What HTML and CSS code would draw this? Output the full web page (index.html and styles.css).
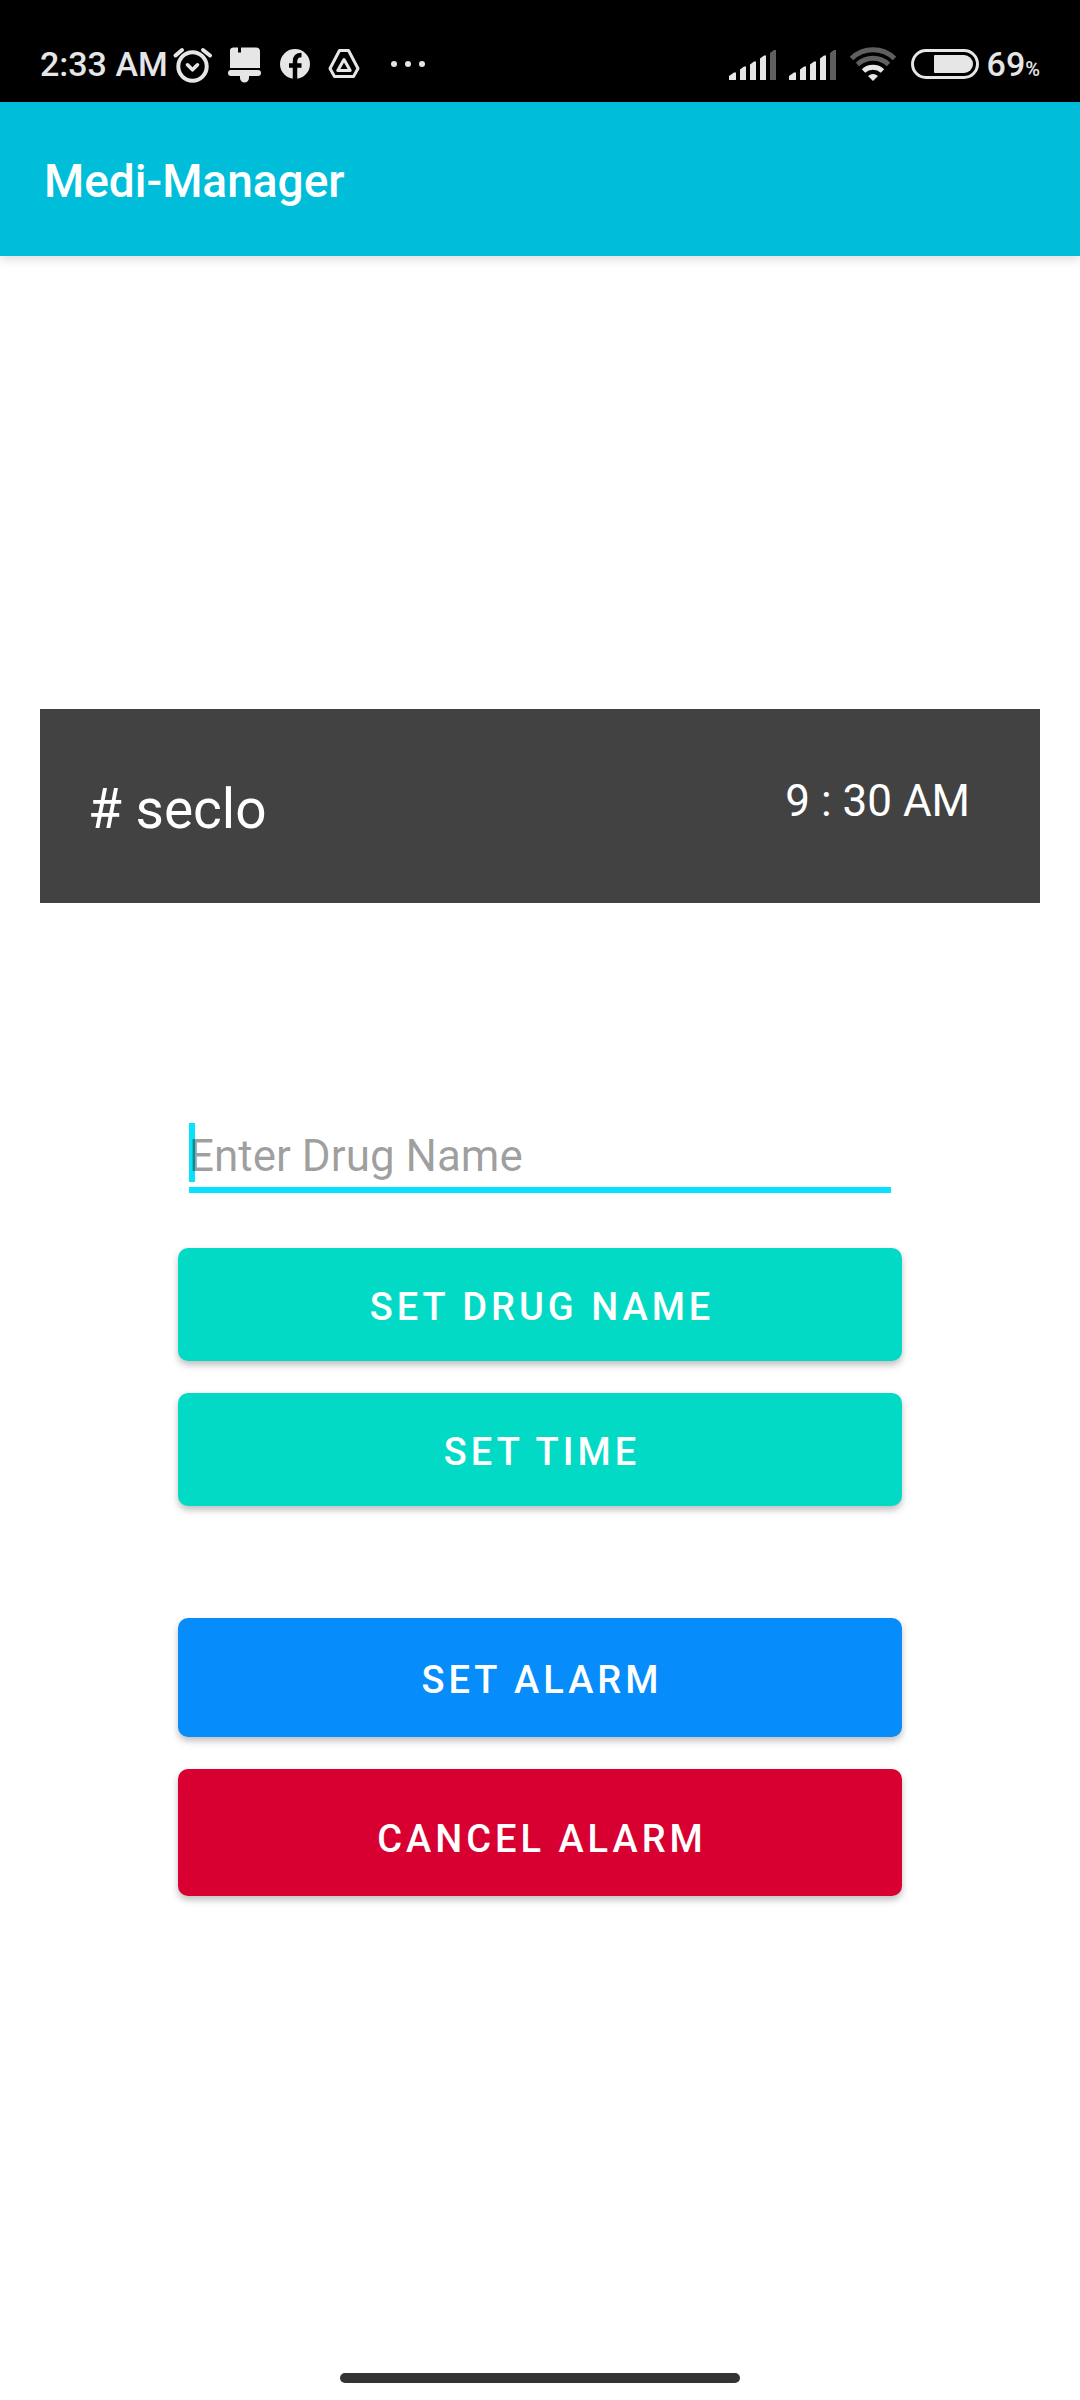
FILE: index.html
```html
<!DOCTYPE html>
<html lang="en">
<head>
<meta charset="utf-8">
<meta name="viewport" content="width=device-width, initial-scale=1">
<title>Medi-Manager</title>
<link rel="stylesheet" href="styles.css">
</head>
<body>
<div class="status-bar">
  <div class="status-group status-left">
    <span class="clock">2:33 AM</span>
    <svg class="icon-alarm" width="42" height="40" viewBox="0 0 42 40" fill="none" stroke="currentColor" stroke-linecap="round" stroke-linejoin="round" aria-hidden="true">
      <circle cx="20.500" cy="22.500" r="14.200" stroke-width="4"/>
      <path d="M15.500 20.800l5 5 5-5" stroke-width="3.600"/>
      <path d="M3.500 11.500L10 6M31 6l7 5.500" stroke-width="4"/>
    </svg>
    <svg width="34" height="40" viewBox="0 0 34 40" fill="currentColor" aria-hidden="true">
      <path d="M5 3.500h5v5h3v-5h15a4 4 0 0 1 4 4V24H2V7a3.500 3.500 0 0 1 3-3.500z"/>
      <rect x="0" y="26" width="33" height="6" rx="3"/>
      <path d="M12 32h9v2a4.500 4.500 0 0 1-9 0z"/>
    </svg>
    <svg width="30" height="40" viewBox="0 0 30 40" aria-hidden="true">
      <circle cx="15" cy="20" r="15" fill="currentColor"/>
      <path d="M15 35V17.500c0-4.500 2-6.500 6.500-6.500M9 21.500h12.500" fill="none" stroke="#000" stroke-width="4.500"/>
    </svg>
    <svg class="icon-drive" width="32" height="40" viewBox="0 0 32 40" fill="none" stroke="currentColor" stroke-width="3" stroke-linejoin="round" aria-hidden="true">
      <path d="M11.500 6.500h9L30 24.500l-4.500 8h-19L2 24.500z"/>
      <path d="M16 15.500l6.200 11H9.800z"/>
    </svg>
    <svg class="icon-more" width="36" height="40" viewBox="0 0 36 40" fill="currentColor" aria-hidden="true">
      <circle cx="4" cy="20" r="3"/><circle cx="18" cy="20" r="3"/><circle cx="32" cy="20" r="3"/>
    </svg>
  </div>
  <div class="status-group status-right">
    <svg width="48" height="40" viewBox="0 0 48 40" fill="currentColor" aria-hidden="true">
      <path d="M0 36V32l5-3.500h2V36zM11 36V25.500l4-3h2V36zM21 36V20.500l4-3h2V36zM31 36V14.500l4-3h2V36z"/>
      <path class="faint" d="M41 36V9l4-3h2v30z"/>
    </svg>
    <svg width="48" height="40" viewBox="0 0 48 40" fill="currentColor" aria-hidden="true">
      <path d="M0 36V32l5-3.500h2V36zM11 36V25.500l4-3h2V36zM21 36V20.500l4-3h2V36zM31 36V14.500l4-3h2V36z"/>
      <path class="faint" d="M41 36V9l4-3h2v30z"/>
    </svg>
    <svg width="48" height="40" viewBox="0 0 48 40" fill="none" stroke="currentColor" stroke-width="5" aria-hidden="true">
      <path class="faint-line" d="M2.500 14.500a31 31 0 0 1 43 0M8.500 20.500a22.500 22.500 0 0 1 31 0"/>
      <path d="M14.500 27a14 14 0 0 1 19 0"/>
      <path d="M24 37l-5-5q5-4 10 0z" fill="currentColor" stroke="none"/>
    </svg>
    <svg class="icon-battery" width="68" height="40" viewBox="0 0 68 40" aria-hidden="true">
      <rect x="1.500" y="6.500" width="65" height="27" rx="13.500" fill="none" stroke="currentColor" stroke-width="3"/>
      <path d="M24 11h29a9 9 0 0 1 0 18H24a1 1 0 0 1-1-1V12a1 1 0 0 1 1-1z" fill="currentColor"/>
    </svg>
    <span class="charge">69<small class="percent">%</small></span>
  </div>
</div>

<header class="app-bar">
  <h1 class="app-title">Medi-Manager</h1>
</header>

<main class="screen">
  <section class="reminder">
    <span class="drug"># seclo</span>
    <time class="time" datetime="09:30">9 : 30 AM</time>
  </section>
  <form class="form">
    <input class="field" type="text" aria-label="Drug name" placeholder="Enter Drug Name">
    <button class="btn btn-teal" type="button">SET DRUG NAME</button>
    <button class="btn btn-teal" type="button">SET TIME</button>
    <button class="btn btn-blue" type="button">SET ALARM</button>
    <button class="btn btn-red" type="button">CANCEL ALARM</button>
  </form>
</main>

<div class="home-bar"></div>
</body>
</html>
```
FILE: styles.css
```css
* {
  box-sizing: border-box;
}

body {
  margin: 0;
  min-height: 100vh;
  display: flex;
  flex-direction: column;
  background: #fff;
  font-family: Roboto, "Liberation Sans", sans-serif;
}

svg {
  display: block;
  flex: none;
}

.status-bar {
  display: flex;
  justify-content: space-between;
  height: 102px;
  padding: 25px 40px 0;
  background: #000;
  color: #e6e6e6;
}

.status-group {
  display: flex;
  align-items: center;
  height: 78px;
}

.status-left {
  gap: 18px;
}

.status-right {
  gap: 12px;
}

.clock,
.charge {
  font-size: 34px;
  line-height: 40px;
  font-weight: 500;
  white-space: nowrap;
}

.charge {
  margin-left: -4px;
}

.icon-alarm {
  margin-left: -14px;
  margin-right: -4px;
}

.icon-more {
  margin-left: 12px;
}

.icon-battery {
  margin-left: 2px;
}

.percent {
  font-size: 20px;
  line-height: 20px;
}

.faint {
  fill: #5f5f5f;
}

.faint-line {
  stroke: #5f5f5f;
}

.app-bar {
  display: flex;
  align-items: center;
  height: 154px;
  padding: 4px 44px 0;
  background: #00bed9;
  box-shadow: 0 3px 10px rgba(0, 0, 0, 0.15);
}

.app-title {
  margin: 0;
  color: #fff;
  font-size: 46px;
  line-height: 60px;
  font-weight: 500;
}

.screen {
  flex: 1;
  padding-top: 453px;
}

.reminder {
  display: flex;
  justify-content: space-between;
  align-items: flex-start;
  height: 194px;
  margin: 0 40px;
  padding: 66px 70px 0 48px;
  background: #424242;
  color: #fff;
}

.drug {
  font-size: 55px;
  line-height: 68px;
}

.time {
  font-size: 44px;
  line-height: 52px;
}

.form {
  display: flex;
  flex-direction: column;
  gap: 32px;
  padding: 220px 178px 80px;
}

.field {
  height: 70px;
  margin: 0 11px 23px;
  padding: 5px 0 4px;
  border: 0;
  border-bottom: 6px solid #08e0fd;
  border-radius: 0;
  outline: 0;
  background: linear-gradient(#08e0fd, #08e0fd) left top / 6px 59px no-repeat;
  color: #222;
  font: 44px/52px Roboto, "Liberation Sans", sans-serif;
}

.field::placeholder {
  color: rgba(0, 0, 0, 0.38);
  opacity: 1;
}

.btn {
  height: 113px;
  padding: 4px 0 0 4px;
  border: 0;
  border-radius: 10px;
  box-shadow: 0 4px 7px rgba(0, 0, 0, 0.25);
  color: #fff;
  font: 500 38px/48px Roboto, "Liberation Sans", sans-serif;
  letter-spacing: 4px;
}

.btn-teal {
  background: #03dac6;
}

.btn-blue {
  height: 119px;
  margin-top: 80px;
  background: #078cfc;
}

.btn-red {
  height: 127px;
  padding-top: 12px;
  background: #d80031;
}

.home-bar {
  width: 37%;
  height: 10px;
  margin: 0 auto 17px;
  border-radius: 5px;
  background: #333;
}
```
